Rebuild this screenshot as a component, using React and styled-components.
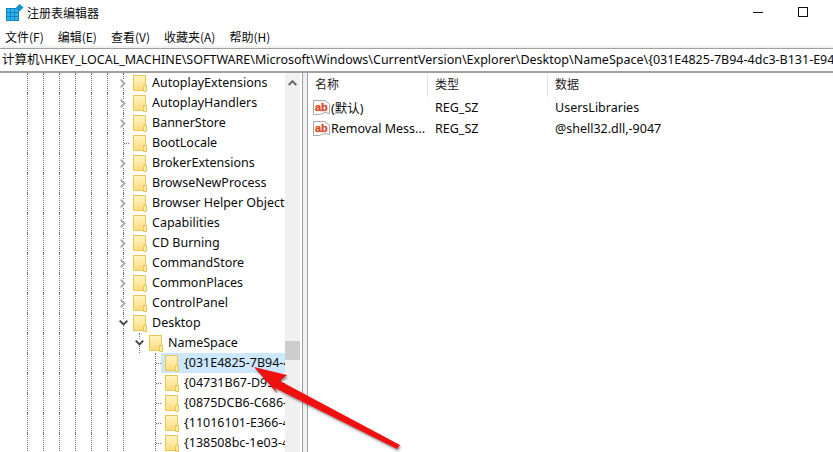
import React from "react";
import styled, { createGlobalStyle } from "styled-components";

const GlobalStyle = createGlobalStyle`
  html, body {
    margin: 0;
    padding: 0;
    background: #fff;
  }
  body {
    font-family: "Noto Sans", "Noto Sans CJK SC", sans-serif;
    color: #0a0a0a;
  }
`;

const Window = styled("div")`
  position: relative;
  width: 833px;
  height: 452px;
  overflow: hidden;
  display: flex;
  flex-direction: column;
  background: #fff;
`;

const TitleBar = styled("div")`
  height: 24px;
  display: flex;
  align-items: center;
  padding-left: 6px;
  gap: 3px;
  font-family: "Noto Sans CJK SC", sans-serif;
  font-size: 12px;
`;

const WindowButtons = styled("div")`
  margin-left: auto;
  padding-right: 25px;
  display: flex;
  align-items: center;
  gap: 35px;
`;

const Minimize = styled("div")`
  width: 10px;
  height: 1px;
  background: #111;
`;

const Maximize = styled("div")`
  width: 8px;
  height: 8px;
  border: 1px solid #111;
  margin-top: -1px;
`;

const MenuBar = styled("div")`
  box-sizing: border-box;
  height: 24px;
  padding: 3px 0 0 5px;
  display: flex;
  align-items: center;
  gap: 14px;
  font-size: 12px;
  font-family: "Noto Sans CJK SC", sans-serif;
  border-bottom: 2px solid #f0f0f0;
`;

const AddressBar = styled("div")`
  height: 22px;
  line-height: 21px;
  padding-left: 2px;
  font-size: 12.5px;
  white-space: nowrap;
  overflow: hidden;
  border-top: 1px solid #a0a0a0;
  border-bottom: 2px solid #a0a0a0;
`;

const Panes = styled("div")`
  flex: 1;
  display: flex;
  min-height: 0;
`;

const TreePane = styled("div")`
  width: 302px;
  display: flex;
  flex-shrink: 0;
`;

const TreeList = styled("div")`
  width: 285px;
  overflow: hidden;
`;

const Row = styled("div")`
  height: 20px;
  display: flex;
  padding-left: 19px;
  font-size: 12.5px;
  white-space: nowrap;
`;

const Guide = styled("span")`
  width: 16px;
  flex-shrink: 0;
  position: relative;
  &::before {
    content: "";
    display: ${p => (p.$hidden ? "none" : "block")};
    position: absolute;
    left: 8px;
    top: 0;
    bottom: 0;
    border-left: 1px dotted #707070;
  }
`;

const Expander = styled(Guide)`
  width: 14px;
  display: flex;
  align-items: center;
  justify-content: center;
  svg {
    position: relative;
    margin-left: 2px;
    background: #fff;
  }
  &::after {
    content: "";
    display: ${p => (p.$stub ? "block" : "none")};
    position: absolute;
    left: 9px;
    top: 10px;
    width: 5px;
    border-top: 1px dotted #707070;
  }
`;

const Label = styled("div")`
  flex: 1;
  min-width: 0;
  display: flex;
  align-items: center;
  gap: 5px;
  padding-left: 4px;
  line-height: 20px;
  background: ${p => (p.$selected ? "#cce8ff" : "transparent")};
`;

const Scrollbar = styled("div")`
  width: 15px;
  background: #f0f0f0;
  display: flex;
  flex-direction: column;
  align-items: center;
  padding-top: 7px;
`;

const Thumb = styled("div")`
  width: 15px;
  height: 19px;
  background: #cdcdcd;
  margin-top: 255px;
`;

const Splitter = styled("div")`
  box-sizing: border-box;
  width: 6px;
  flex-shrink: 0;
  background: #f0f0f0;
  border-left: 1px solid #a0a0a0;
  border-right: 1px solid #a0a0a0;
`;

const ListPane = styled("div")`
  flex: 1;
  font-size: 12.5px;
`;

const ListHeader = styled("div")`
  height: 24px;
  display: flex;
  font-family: "Noto Sans CJK SC", sans-serif;
  font-size: 12px;
  color: #222;
`;

const HeaderCell = styled("div")`
  width: 120px;
  padding-left: ${p => p.$pad}px;
  box-sizing: border-box;
  line-height: 22px;
  border-right: ${p => (p.$last ? "0" : "1px solid #e5e5e5")};
`;

const ListRow = styled("div")`
  height: 21px;
  display: flex;
  align-items: center;
`;

const NameCell = styled("div")`
  width: 127px;
  padding-left: 5px;
  box-sizing: border-box;
  display: flex;
  align-items: center;
  gap: 1px;
  white-space: nowrap;
`;

const TypeCell = styled("div")`
  width: 120px;
`;

const FolderIcon = () => (
  <svg width="14" height="17" viewBox="0 0 14 17" style={{ flexShrink: 0 }}>
    <defs>
      <linearGradient id="folderFill" x1="0" y1="0" x2="0" y2="1">
        <stop offset="0" stopColor="#fff5c4" />
        <stop offset="1" stopColor="#fcdb7a" />
      </linearGradient>
    </defs>
    <rect x="0.5" y="0.5" width="12" height="15" fill="url(#folderFill)" stroke="#e9c558" />
    <path d="M10.5 16.5V10.5H13.5V16.5Z" fill="#fce9a0" stroke="#e9c558" />
  </svg>
);

const RegeditIcon = () => (
  <svg width="18" height="17" viewBox="0 0 18 17">
    <rect x="0" y="4" width="13" height="13" fill="#0a84c6" />
    <path d="M1 5h3v3H1zM5 5h3v3H5zM9 5h3v3H9zM1 9h3v3H1zM5 9h3v3H5zM9 9h3v3H9zM1 13h3v3H1zM5 13h3v3H5zM9 13h3v3H9z" fill="#2fb4ea" />
    <path d="M13.5 0L17.5 3.5L13.5 7.5L10 3.5Z" fill="#1b8fcf" />
  </svg>
);

const StringIcon = () => (
  <svg width="17" height="15" viewBox="0 0 17 15" style={{ flexShrink: 0 }}>
    <path d="M0.5 0.5H12L16.5 4V13.5L12 12.5L6 14.5H0.5Z" fill="#fff" stroke="#a8a8a8" />
    <text x="2" y="10.5" fontFamily="Liberation Sans, sans-serif" fontWeight="700" fontSize="11" stroke="#d8491f" strokeWidth="0.3" fill="#d8491f">
      ab
    </text>
  </svg>
);

const Chevron = ({ open }) =>
  open ? (
    <svg width="9" height="6" viewBox="0 0 9 6">
      <path d="M0.7 0.7L4.5 4.5L8.3 0.7" fill="none" stroke="#404040" strokeWidth="1.8" />
    </svg>
  ) : (
    <svg width="6" height="9" viewBox="0 0 6 9">
      <path d="M0.7 0.7L4.5 4.5L0.7 8.3" fill="none" stroke="#a6a6a6" strokeWidth="1.8" />
    </svg>
  );

const ScrollUp = () => (
  <svg width="9" height="6" viewBox="0 0 9 6">
    <path d="M0.7 5L4.5 1.2L8.3 5" fill="none" stroke="#606060" strokeWidth="1.8" />
  </svg>
);

const Arrow = styled("svg")`
  position: absolute;
  left: 0;
  top: 0;
  pointer-events: none;
  filter: drop-shadow(1px 2px 1px rgba(0, 0, 0, 0.4));
`;

const MENUS = ["文件(F)", "编辑(E)", "查看(V)", "收藏夹(A)", "帮助(H)"];

const ADDRESS =
  "计算机\\HKEY_LOCAL_MACHINE\\SOFTWARE\\Microsoft\\Windows\\CurrentVersion\\Explorer\\Desktop\\NameSpace\\{031E4825-7B94-4dc3-B131-E946B44C8DD5}";

const TREE = [
  { name: "AutoplayExtensions", state: "closed" },
  { name: "AutoplayHandlers", state: "closed" },
  { name: "BannerStore", state: "closed" },
  { name: "BootLocale", state: "leaf" },
  { name: "BrokerExtensions", state: "closed" },
  { name: "BrowseNewProcess", state: "closed" },
  { name: "Browser Helper Objects", state: "closed" },
  { name: "Capabilities", state: "closed" },
  { name: "CD Burning", state: "closed" },
  { name: "CommandStore", state: "closed" },
  { name: "CommonPlaces", state: "closed" },
  { name: "ControlPanel", state: "closed" },
  { name: "Desktop", state: "open" },
  { name: "NameSpace", state: "open", level: 1 },
  { name: "{031E4825-7B94-4dc3-B131-E946B44C8DD5}", state: "leaf", level: 2, selected: true },
  { name: "{04731B67-D933-450a-90E6-4ACD2E9408FE}", state: "leaf", level: 2 },
  { name: "{0875DCB6-C686-4243-9432-ADCCF0B9F2D7}", state: "leaf", level: 2 },
  { name: "{11016101-E366-4D22-BC06-4ADA335C892B}", state: "leaf", level: 2 },
  { name: "{138508bc-1e03-49ea-9c8f-ea9e1d05d65d}", state: "leaf", level: 2 }
];

const VALUES = [
  { name: "(默认)", type: "REG_SZ", data: "UsersLibraries" },
  { name: "Removal Mess...", type: "REG_SZ", data: "@shell32.dll,-9047" }
];

const TreeRow = ({ item }) => {
  const level = item.level || 0;
  return (
    <Row>
      {[0, 1, 2, 3, 4, 5].map(i => (
        <Guide key={i} />
      ))}
      {level > 0 && <Guide />}
      {level > 1 && <Guide $hidden />}
      <Expander $stub={item.state === "leaf"}>
        {item.state !== "leaf" && <Chevron open={item.state === "open"} />}
      </Expander>
      <Label $selected={item.selected}>
        <FolderIcon />
        <span>{item.name}</span>
      </Label>
    </Row>
  );
};

const App = () => (
  <Window>
    <GlobalStyle />
    <TitleBar>
      <RegeditIcon />
      注册表编辑器
      <WindowButtons>
        <Minimize />
        <Maximize />
      </WindowButtons>
    </TitleBar>
    <MenuBar>
      {MENUS.map(m => (
        <span key={m}>{m}</span>
      ))}
    </MenuBar>
    <AddressBar>{ADDRESS}</AddressBar>
    <Panes>
      <TreePane>
        <TreeList>
          {TREE.map(item => (
            <TreeRow key={item.name} item={item} />
          ))}
        </TreeList>
        <Scrollbar>
          <ScrollUp />
          <Thumb />
        </Scrollbar>
      </TreePane>
      <Splitter />
      <ListPane>
        <ListHeader>
          <HeaderCell $pad={7}>名称</HeaderCell>
          <HeaderCell $pad={7}>类型</HeaderCell>
          <HeaderCell $pad={7} $last>数据</HeaderCell>
        </ListHeader>
        {VALUES.map(v => (
          <ListRow key={v.name}>
            <NameCell>
              <StringIcon />
              {v.name}
            </NameCell>
            <TypeCell>{v.type}</TypeCell>
            <div>{v.data}</div>
          </ListRow>
        ))}
      </ListPane>
    </Panes>
    <Arrow width="833" height="452" viewBox="0 0 833 452">
      <polygon points="254,367 287,375 280,381 400,445 397,449 275,388 277,393" fill="#f01010" />
    </Arrow>
  </Window>
);

export default App;
